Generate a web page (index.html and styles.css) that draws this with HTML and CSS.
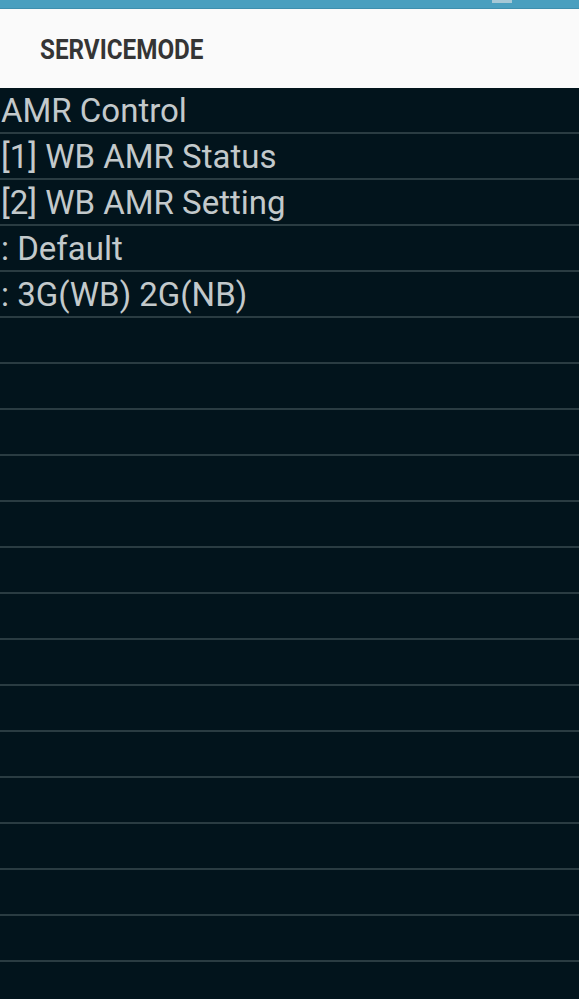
FILE: index.html
```html
<!DOCTYPE html>
<html lang="en">
<head>
    <meta charset="UTF-8">
    <meta name="viewport" content="width=device-width, initial-scale=1.0">
    <title>ServiceMode</title>
    <link rel="stylesheet" href="styles.css">
</head>
<body>
    <div class="status-bar">
        <span class="battery"></span>
    </div>
    <header class="app-bar">
        <h1><span>SERVICEMODE</span></h1>
    </header>
    <ul class="menu">
        <li>AMR Control</li>
        <li>[1] WB AMR Status</li>
        <li>[2] WB AMR Setting</li>
        <li>: Default</li>
        <li>: 3G(WB) 2G(NB)</li>
        <li></li>
        <li></li>
        <li></li>
        <li></li>
        <li></li>
        <li></li>
        <li></li>
        <li></li>
        <li></li>
        <li></li>
        <li></li>
        <li></li>
        <li></li>
        <li></li>
        <li></li>
    </ul>
</body>
</html>
```

FILE: styles.css
```css
* {
    margin: 0;
    padding: 0;
    box-sizing: border-box;
}
html, body {
    height: 100%;
}
body {
    font-family: Roboto, 'Liberation Sans', sans-serif;
    background-color: #02141c;
    overflow: hidden;
}
.status-bar {
    height: 9px;
    background-color: #4a9fbf;
    border-bottom: 1px solid #3f8fae;
    display: flex;
    justify-content: flex-end;
    padding-right: 67px;
}
.battery {
    width: 20px;
    height: 3px;
    background-color: #a6c8d6;
}
.app-bar {
    height: 79px;
    background-color: #fafafa;
    display: flex;
    align-items: center;
    padding-left: 40px;
}
.app-bar h1 {
    font-size: 28px;
    font-weight: 700;
    color: #353535;
    line-height: 1;
    margin-top: 3px;
}
.app-bar h1 span {
    display: inline-block;
    transform: scaleX(0.865);
    transform-origin: left center;
}
.menu {
    list-style: none;
}
.menu li {
    height: 46px;
    padding-top: 2px;
    line-height: 42px;
    font-size: 33px;
    color: #c3c9cb;
    border-bottom: 2px solid #2a3c42;
    padding-left: 1px;
    white-space: nowrap;
}
```
